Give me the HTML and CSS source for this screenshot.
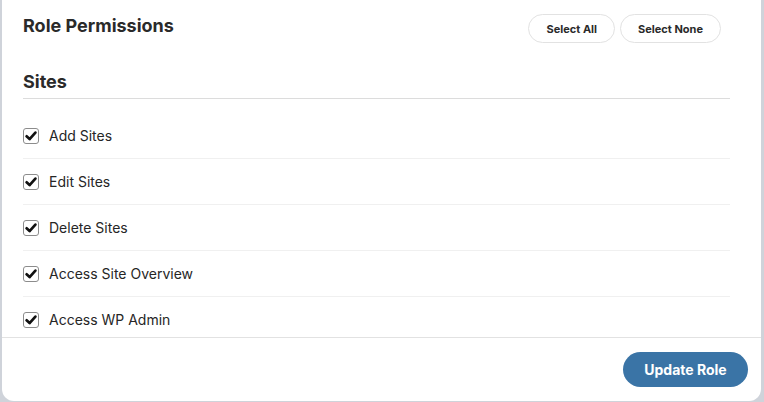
FILE: index.html
```html
<!DOCTYPE html>
<html>
<head>
<meta charset="utf-8">
<link rel="stylesheet" href="styles.css">
</head>
<body>
<div class="modal">
  <div class="modal-body">
    <div class="header">
      <h2 class="title">Role Permissions</h2>
      <div class="actions">
        <button class="pill">Select All</button>
        <button class="pill">Select None</button>
      </div>
    </div>
    <div class="section">
      <h3 class="section-title">Sites</h3>
      <ul class="perm-list">
        <li class="perm"><span class="cb"><svg viewBox="0 0 16 16" width="16" height="16"><path d="M3.6 8.3 L6.6 11.1 L12.4 4.6" fill="none" stroke="#111" stroke-width="2.7" stroke-linecap="round" stroke-linejoin="round"/></svg></span><span class="label">Add Sites</span></li>
        <li class="perm"><span class="cb"><svg viewBox="0 0 16 16" width="16" height="16"><path d="M3.6 8.3 L6.6 11.1 L12.4 4.6" fill="none" stroke="#111" stroke-width="2.7" stroke-linecap="round" stroke-linejoin="round"/></svg></span><span class="label">Edit Sites</span></li>
        <li class="perm"><span class="cb"><svg viewBox="0 0 16 16" width="16" height="16"><path d="M3.6 8.3 L6.6 11.1 L12.4 4.6" fill="none" stroke="#111" stroke-width="2.7" stroke-linecap="round" stroke-linejoin="round"/></svg></span><span class="label">Delete Sites</span></li>
        <li class="perm"><span class="cb"><svg viewBox="0 0 16 16" width="16" height="16"><path d="M3.6 8.3 L6.6 11.1 L12.4 4.6" fill="none" stroke="#111" stroke-width="2.7" stroke-linecap="round" stroke-linejoin="round"/></svg></span><span class="label">Access Site Overview</span></li>
        <li class="perm"><span class="cb"><svg viewBox="0 0 16 16" width="16" height="16"><path d="M3.6 8.3 L6.6 11.1 L12.4 4.6" fill="none" stroke="#111" stroke-width="2.7" stroke-linecap="round" stroke-linejoin="round"/></svg></span><span class="label">Access WP Admin</span></li>
      </ul>
    </div>
  </div>
  <div class="footer">
    <button class="primary">Update Role</button>
  </div>
</div>
</body>
</html>
```
FILE: styles.css
```css
* { box-sizing: border-box; }
html, body { margin: 0; padding: 0; }
body {
  background: #cfd3da;
  font-family: Inter, "Noto Sans", sans-serif;
  color: #262626;
  height: 402px;
  overflow: hidden;
}
.modal {
  margin-left: 2px;
  width: 759px;
  height: 401px;
  background: #fff;
  border-radius: 0 0 12px 12px;
  display: flex;
  flex-direction: column;
  overflow: hidden;
}
.modal-body {
  height: 337px;
  overflow: hidden;
  flex: none;
}
.header {
  display: flex;
  justify-content: space-between;
  align-items: flex-start;
  padding: 14px 40px 0 21px;
}
.title {
  margin: 0;
  font-size: 18px;
  line-height: 24px;
  font-weight: 700;
  color: #2a2a2a;
}
.actions {
  display: flex;
  gap: 5px;
}
.pill {
  height: 29px;
  padding: 0 17px;
  border: 1px solid #e2e2e2;
  border-radius: 999px;
  background: #fff;
  font-family: Inter, sans-serif;
  font-size: 11px;
  font-weight: 700;
  color: #2a2a2a;
}
.section {
  padding: 27px 31px 0 21px;
}
.section-title {
  margin: 0;
  font-size: 18px;
  line-height: 24px;
  font-weight: 700;
  color: #2a2a2a;
  padding-bottom: 4px;
  border-bottom: 1px solid #dcdcdc;
}
.perm-list {
  list-style: none;
  margin: 14px 0 0;
  padding: 0;
}
.perm {
  height: 46px;
  display: flex;
  align-items: center;
  border-bottom: 1px solid #f0f0f0;
}
.cb {
  width: 16px;
  height: 16px;
  border: 1px solid #8c8c8c;
  border-radius: 3px;
  display: flex;
  align-items: center;
  justify-content: center;
  margin-right: 10px;
  margin-top: 1px;
  flex: none;
}
.cb svg { display: block; margin: -1px; }
.label {
  font-size: 14px;
  color: #262626;
}
.footer {
  border-top: 1px solid #e2e2e2;
  display: flex;
  justify-content: flex-end;
  padding: 14px 13px 0 0;
  flex: 1;
}
.primary {
  height: 35px;
  width: 125px;
  border: none;
  border-radius: 999px;
  background: #3a74a6;
  color: #fff;
  font-family: Inter, sans-serif;
  font-size: 14px;
  font-weight: 700;
}
```
